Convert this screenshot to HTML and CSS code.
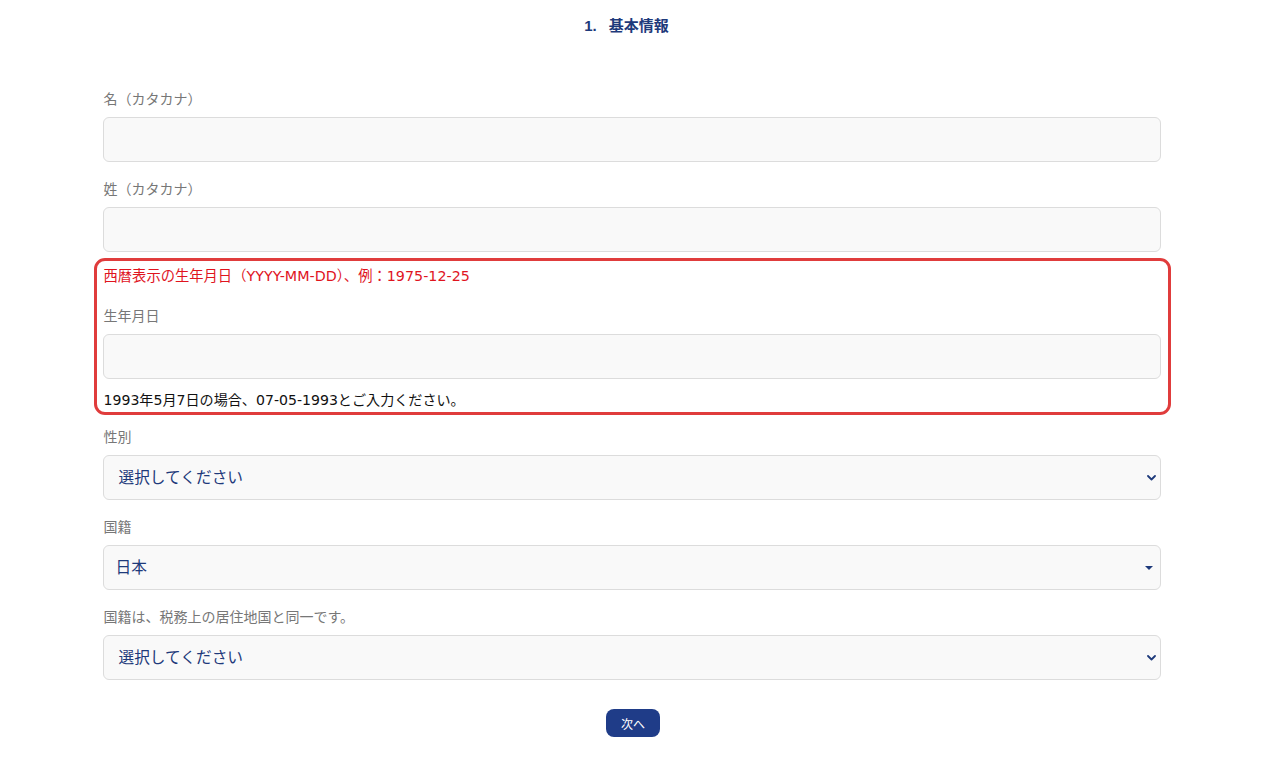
FILE: index.html
```html
<!DOCTYPE html>
<html lang="ja">
<head>
<meta charset="utf-8">
<title>基本情報</title>
<link rel="stylesheet" href="styles.css">
</head>
<body>
<main class="page">
  <h1 class="title"><span class="title-num">1.</span>基本情報</h1>
  <form class="form">
    <div class="field">
      <label class="label">名（カタカナ）</label>
      <input class="input" type="text">
    </div>
    <div class="field field-tight">
      <label class="label">姓（カタカナ）</label>
      <input class="input" type="text">
    </div>
    <div class="highlight">
      <p class="note-red">西暦表示の生年月日（YYYY-MM-DD）、例：1975-12-25</p>
      <label class="label">生年月日</label>
      <input class="input" type="text">
      <p class="help">1993年5月7日の場合、07-05-1993とご入力ください。</p>
    </div>
    <div class="field">
      <label class="label">性別</label>
      <div class="select">
        <span class="select-text">選択してください</span>
        <svg class="chev" width="9" height="6" viewBox="0 0 9 6"><path d="M1 1l3.5 3.5L8 1" fill="none" stroke="#1e3a7b" stroke-width="1.8" stroke-linecap="round" stroke-linejoin="round"/></svg>
      </div>
    </div>
    <div class="field">
      <label class="label">国籍</label>
      <div class="select">
        <span class="select-text select-text-alt">日本</span>
        <svg class="tri" width="8" height="4" viewBox="0 0 8 4"><path d="M0 0h8L4 4z" fill="#1e3a7b"/></svg>
      </div>
    </div>
    <div class="field">
      <label class="label">国籍は、税務上の居住地国と同一です。</label>
      <div class="select">
        <span class="select-text">選択してください</span>
        <svg class="chev" width="9" height="6" viewBox="0 0 9 6"><path d="M1 1l3.5 3.5L8 1" fill="none" stroke="#1e3a7b" stroke-width="1.8" stroke-linecap="round" stroke-linejoin="round"/></svg>
      </div>
    </div>
    <div class="actions">
      <button class="btn" type="button">次へ</button>
    </div>
  </form>
</main>
</body>
</html>
```
FILE: styles.css
```css
* { box-sizing: border-box; }
html, body { margin: 0; padding: 0; background: #fff; }
body {
  font-family: "DejaVu Sans", "Noto Sans CJK JP", sans-serif;
  color: #222;
}
.page {
  width: 1058px;
  margin: 0 auto;
}
.title {
  margin: 0;
  padding-top: 16px;
  height: 89px;
  text-align: center;
  font-family: "Liberation Sans", "Noto Sans CJK JP", sans-serif;
  font-size: 15px;
  line-height: 20px;
  font-weight: 700;
  color: #1e3a7b;
  padding-right: 10px;
}
.title-num { margin-right: 12px; }
.form { display: flex; flex-direction: column; }
.field { display: flex; flex-direction: column; margin-bottom: 17px; }
.field-tight { margin-bottom: 6px; }
.label {
  display: block;
  font-size: 14px;
  line-height: 20px;
  color: #777;
  margin-bottom: 8px;
  padding-top: 1px;
  margin-top: -1px;
  padding-left: 1px;
}
.input {
  display: block;
  width: 100%;
  height: 45px;
  border: 1px solid #dcdcdc;
  border-radius: 6px;
  background: #f9f9f9;
  font: inherit;
  padding: 0 12px;
}
.highlight {
  margin: 0 -10px 12px -9px;
  border: 3px solid #e03c3c;
  border-radius: 11px;
  padding: 5px 7px 2px 6px;
  display: flex;
  flex-direction: column;
}
.note-red {
  margin: 0 0 20px;
  font-size: 14.3px;
  line-height: 20px;
  color: #e0141e;
  padding-left: 1px;
}
.help {
  margin: 11px 0 0;
  font-size: 14.1px;
  line-height: 20px;
  color: #111;
  padding-left: 1px;
}
.select {
  position: relative;
  height: 45px;
  border: 1px solid #dcdcdc;
  border-radius: 6px;
  background: #f9f9f9;
  display: flex;
  align-items: center;
  padding-left: 15px;
}
.select-text {
  font-size: 15.7px;
  color: #1e3a7b;
  line-height: 20px;
}
.select-text-alt { margin-left: -3px; }
.chev {
  position: absolute;
  right: 4px;
  top: 19px;
}
.tri {
  position: absolute;
  right: 7px;
  top: 20px;
}
.actions {
  display: flex;
  justify-content: center;
  margin-top: 12px;
  padding-left: 3px;
}
.btn {
  width: 54px;
  height: 28px;
  border: none;
  border-radius: 8px;
  background: #1f3c88;
  color: #fff;
  font-family: "Noto Sans CJK JP", sans-serif;
  font-size: 12px;
  padding: 0;
  cursor: pointer;
}
```
